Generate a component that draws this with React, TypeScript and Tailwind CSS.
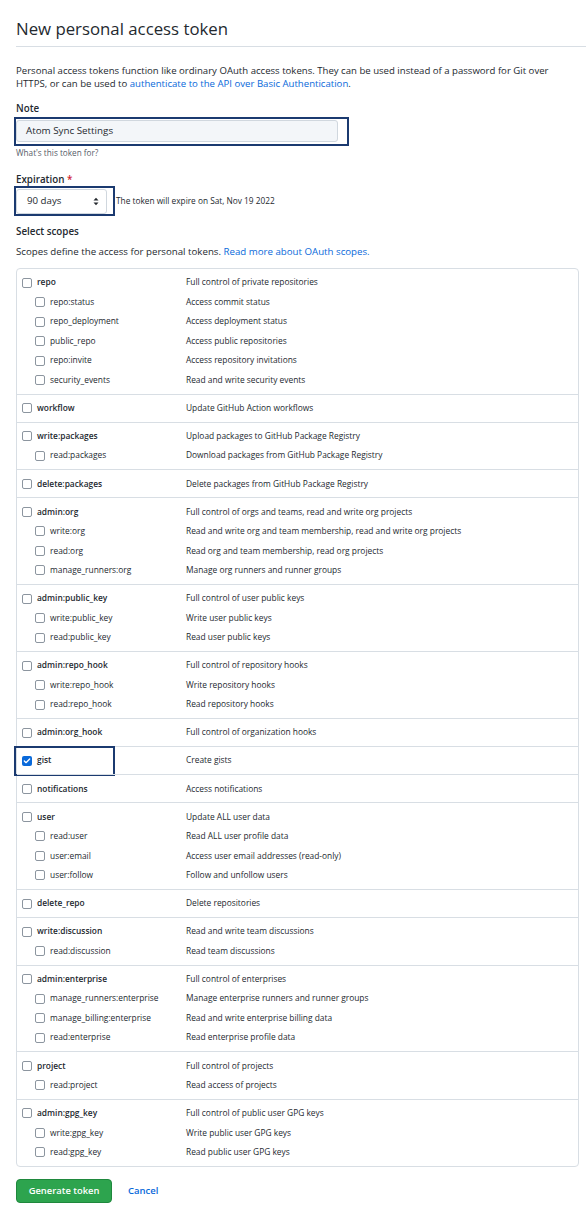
import { Check } from "lucide-react"

type Scope = {
  name: string
  desc: string
  checked?: boolean
  marked?: boolean
  children?: [string, string][]
}

const scopes: Scope[] = [
  {
    name: "repo",
    desc: "Full control of private repositories",
    children: [
      ["repo:status", "Access commit status"],
      ["repo_deployment", "Access deployment status"],
      ["public_repo", "Access public repositories"],
      ["repo:invite", "Access repository invitations"],
      ["security_events", "Read and write security events"],
    ],
  },
  { name: "workflow", desc: "Update GitHub Action workflows" },
  {
    name: "write:packages",
    desc: "Upload packages to GitHub Package Registry",
    children: [["read:packages", "Download packages from GitHub Package Registry"]],
  },
  { name: "delete:packages", desc: "Delete packages from GitHub Package Registry" },
  {
    name: "admin:org",
    desc: "Full control of orgs and teams, read and write org projects",
    children: [
      ["write:org", "Read and write org and team membership, read and write org projects"],
      ["read:org", "Read org and team membership, read org projects"],
      ["manage_runners:org", "Manage org runners and runner groups"],
    ],
  },
  {
    name: "admin:public_key",
    desc: "Full control of user public keys",
    children: [
      ["write:public_key", "Write user public keys"],
      ["read:public_key", "Read user public keys"],
    ],
  },
  {
    name: "admin:repo_hook",
    desc: "Full control of repository hooks",
    children: [
      ["write:repo_hook", "Write repository hooks"],
      ["read:repo_hook", "Read repository hooks"],
    ],
  },
  { name: "admin:org_hook", desc: "Full control of organization hooks" },
  { name: "gist", desc: "Create gists", checked: true, marked: true },
  { name: "notifications", desc: "Access notifications" },
  {
    name: "user",
    desc: "Update ALL user data",
    children: [
      ["read:user", "Read ALL user profile data"],
      ["user:email", "Access user email addresses (read-only)"],
      ["user:follow", "Follow and unfollow users"],
    ],
  },
  { name: "delete_repo", desc: "Delete repositories" },
  {
    name: "write:discussion",
    desc: "Read and write team discussions",
    children: [["read:discussion", "Read team discussions"]],
  },
  {
    name: "admin:enterprise",
    desc: "Full control of enterprises",
    children: [
      ["manage_runners:enterprise", "Manage enterprise runners and runner groups"],
      ["manage_billing:enterprise", "Read and write enterprise billing data"],
      ["read:enterprise", "Read enterprise profile data"],
    ],
  },
  {
    name: "project",
    desc: "Full control of projects",
    children: [["read:project", "Read access of projects"]],
  },
  {
    name: "admin:gpg_key",
    desc: "Full control of public user GPG keys",
    children: [
      ["write:gpg_key", "Write public user GPG keys"],
      ["read:gpg_key", "Read public user GPG keys"],
    ],
  },
]

function Box({ checked }: { checked?: boolean }) {
  if (checked) {
    return (
      <span className="flex h-[10px] w-[10px] shrink-0 items-center justify-center rounded-[2px] bg-[#0969da]">
        <Check className="h-[8px] w-[8px] text-white" strokeWidth={4} />
      </span>
    )
  }
  return <span className="h-[10px] w-[10px] shrink-0 rounded-[2px] border border-[#8c959f] bg-white" />
}

function Row({ name, desc, checked, sub }: { name: string; desc: string; checked?: boolean; sub?: boolean }) {
  return (
    <div className="flex h-[19.5px] items-center">
      <div className={`flex w-[164px] items-center gap-[5px] ${sub ? "pl-[13px]" : ""}`}>
        <Box checked={checked} />
        <span className={sub ? "text-[#24292f]" : "font-semibold text-[#24292f]"}>{name}</span>
      </div>
      <span className="text-[#24292f]">{desc}</span>
    </div>
  )
}

export default function App() {
  return (
    <div className="min-h-screen bg-white pl-4 text-[#24292f] [font-family:'Open_Sans',sans-serif]">
      <h1 className="border-b border-[#d8dee4] pt-[17px] pb-[5px] text-[16.8px] leading-[24px] text-[#24292f]">
        New personal access token
      </h1>

      <p className="mt-[17px] text-[9.6px] leading-[13px]">
        Personal access tokens function like ordinary OAuth access tokens. They can be used instead of a password for Git over
        <br />
        HTTPS, or can be used to <span className="text-[#0969da]">authenticate to the API over Basic Authentication</span>.
      </p>

      <div className="mt-[12px] text-[9.8px] leading-[13px] font-semibold">Note</div>
      <div className="-ml-[2px] mt-[2px] h-[29px] w-[335px] border-2 border-[#1b3a70] pt-[1px]">
        <div className="flex h-[22px] w-[322px] items-center rounded-[3px] border border-[#d0d7de] bg-[#f3f6f9] pl-[9px] text-[9.8px]">
          Atom Sync Settings
        </div>
      </div>
      <div className="mt-[2px] text-[8.2px] leading-[10px] text-[#57606a]">What's this token for?</div>

      <div className="mt-[15px] text-[9.8px] leading-[13px] font-semibold">
        Expiration <span className="text-[#cf222e]">*</span>
      </div>
      <div className="flex items-center">
        <div className="-ml-[2px] h-[30px] w-[101px] border-2 border-[#1b3a70] pt-[1px]">
          <div className="flex h-[25px] w-[91px] items-center justify-between rounded-[3px] border border-[#d0d7de] bg-white pl-[10px] pr-[7px] text-[9.7px]">
            <span>90 days</span>
            <svg width="6" height="9" viewBox="0 0 6 9">
              <path d="M0.5 3.5 L3 0.8 L5.5 3.5 Z M0.5 5.5 L3 8.2 L5.5 5.5 Z" fill="#24292f" />
            </svg>
          </div>
        </div>
        <span className="ml-[1px] text-[8.3px] text-[#24292f]">The token will expire on Sat, Nov 19 2022</span>
      </div>

      <div className="mt-[9px] text-[9.8px] leading-[13px] font-semibold">Select scopes</div>
      <p className="mt-[7px] text-[9.7px] leading-[13px]">
        Scopes define the access for personal tokens. <span className="text-[#0969da]">Read more about OAuth scopes.</span>
      </p>

      <div className="mt-[10px] w-[563px] rounded-[4px] border border-[#d8dee4] text-[8.4px]">
        {scopes.map((s, i) => (
          <div key={s.name} className={`relative py-[3.8px] pl-[5px] ${i > 0 ? "border-t border-[#d8dee4]" : ""}`}>
            <Row name={s.name} desc={s.desc} checked={s.checked} />
            {s.children?.map(([n, d]) => (
              <Row key={n} name={n} desc={d} sub />
            ))}
            {s.marked && (
              <div className="absolute -top-[1px] -left-[3px] h-[30px] w-[101px] border-2 border-[#1b3a70]" />
            )}
          </div>
        ))}
      </div>

      <div className="mt-[12px] flex items-center gap-[16px] pb-[6px]">
        <button className="h-[24px] w-[96px] rounded-[4px] border border-[#1f883d] bg-[#2da44e] text-[9.4px] font-semibold text-white">
          Generate token
        </button>
        <span className="text-[9.5px] font-semibold text-[#0969da]">Cancel</span>
      </div>
    </div>
  )
}
